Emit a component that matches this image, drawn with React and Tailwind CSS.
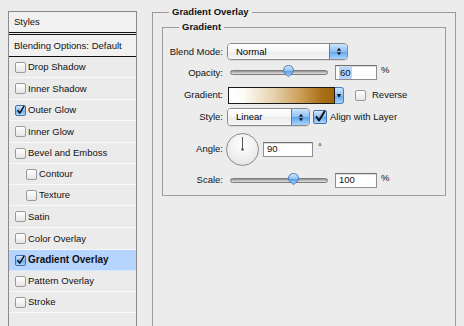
import React from "react";

const STYLES = [
  { label: "Drop Shadow", h: "h-[21px]" },
  { label: "Inner Shadow", h: "h-[22px]" },
  { label: "Outer Glow", h: "h-[21px]", checked: true },
  { label: "Inner Glow", h: "h-[22px]" },
  { label: "Bevel and Emboss", h: "h-[21px]" },
  { label: "Contour", h: "h-[21px]", indent: true },
  { label: "Texture", h: "h-[21px]", indent: true },
  { label: "Satin", h: "h-[22px]" },
  { label: "Color Overlay", h: "h-[22px]" },
  { label: "Gradient Overlay", h: "h-[21px]", checked: true, active: true },
  { label: "Pattern Overlay", h: "h-[21px]" },
  { label: "Stroke", h: "h-[21px]" },
];

function Check({ checked, size = "w-[11px] h-[11px]" }) {
  return (
    <span
      className={`${size} shrink-0 rounded-[2px] border flex items-center justify-center ${
        checked
          ? "border-[#3f6fae] bg-[linear-gradient(#d6e8fc,#86bbf3_50%,#5da2ec_51%,#b4dafd)]"
          : "border-[#9a9a9a] bg-[linear-gradient(#ffffff,#e6e6e6)]"
      }`}
    >
      {checked && (
        <svg viewBox="0 0 12 12" className="w-full h-full overflow-visible">
          <path d="M2.5 6 L5 9.5 L10.5 0.5" fill="none" stroke="#111" strokeWidth="2" strokeLinecap="round" strokeLinejoin="round" />
        </svg>
      )}
    </span>
  );
}

function AquaArrows({ both = true }) {
  return (
    <svg viewBox="0 0 8 12" className="w-[6px] h-[9px]">
      {both && <path d="M4 1 L7 5 H1 Z" fill="#1a1a1a" />}
      <path d={both ? "M4 11 L7 7 H1 Z" : "M4 9 L7 4 H1 Z"} fill="#1a1a1a" />
    </svg>
  );
}

function Popup({ value, width }) {
  return (
    <div
      className={`${width} h-full ml-[4px] flex rounded-[4px] border border-[#8a8a8a] overflow-hidden shadow-[0_1px_0_rgba(0,0,0,0.08)]`}
    >
      <div className="flex-1 flex items-center pl-[8px] text-black bg-[linear-gradient(#ffffff,#f6f6f6_50%,#ebebeb_51%,#f7f7f7)]">
        {value}
      </div>
      <div className="w-[18px] flex items-center justify-center border-l border-[#4d7fc0] bg-[linear-gradient(#cfe4fc,#8cc0f4_50%,#5ea3ec_51%,#a9d5fc)]">
        <AquaArrows />
      </div>
    </div>
  );
}

function Slider({ pct }) {
  return (
    <div className="relative w-[98px] h-full ml-[7px] flex items-center">
      <div className="w-full h-[5px] rounded-full border border-[#7d7d7d] bg-[linear-gradient(#8e8e8e,#c4c4c4_60%,#e2e2e2)]" />
      <svg
        viewBox="0 0 11 12"
        className="absolute w-[11px] h-[12px] top-[1px]"
        style={{ left: `calc(${pct}% - 5.5px)` }}
      >
        <defs>
          <linearGradient id={`knob${pct}`} x1="0" y1="0" x2="0" y2="1">
            <stop offset="0" stopColor="#d9ebfd" />
            <stop offset="0.5" stopColor="#8dc0f3" />
            <stop offset="0.51" stopColor="#5b9fe9" />
            <stop offset="1" stopColor="#a7d3fb" />
          </linearGradient>
        </defs>
        <path d="M5.5 0.5 C8.5 0.5 10.5 2.5 10.5 5.5 C10.5 8 8 9.5 5.5 11.5 C3 9.5 0.5 8 0.5 5.5 C0.5 2.5 2.5 0.5 5.5 0.5 Z" fill={`url(#knob${pct})`} stroke="#3e72b4" strokeWidth="0.9" />
      </svg>
    </div>
  );
}

function Field({ children, width, ml }) {
  return (
    <div
      className={`${width} ${ml} h-[15px] flex items-center pl-[3px] bg-white border border-[#8e8e8e] border-t-[#6e6e6e] shadow-[inset_0_1px_1px_rgba(0,0,0,0.15)]`}
    >
      {children}
    </div>
  );
}

function Row({ label, h, mt, children }) {
  return (
    <div className={`flex items-center ${h} ${mt}`}>
      <span className="w-[60px] text-right shrink-0">{label}</span>
      {children}
    </div>
  );
}

export default function App() {
  return (
    <div className="w-[464px] h-[326px] overflow-hidden flex bg-[#ececec] text-[#111] text-[9.5px] leading-[12px] font-['Liberation_Sans',Arial,sans-serif]">
      <div className="ml-[8px] mt-[11px] w-[129px] h-[330px] shrink-0 border border-[#8a8a8a] bg-[#ebebeb]">
        <div className="h-[21px] flex items-center pl-[5px] border-b border-[#111] bg-[#f1f1f1]">Styles</div>
        <div className="h-[23px] mt-[1px] flex items-center pl-[5px] border-y border-[#111] bg-[#f1f1f1]">
          Blending Options: Default
        </div>
        {STYLES.map((s) => (
          <div
            key={s.label}
            className={`${s.h} flex items-center border-b ${s.indent ? "pl-[17px]" : "pl-[6px]"} ${
              s.active ? "bg-[#b5d5ff] border-[#d7e8ff] font-bold text-[10px]" : "border-[#f9f9f9]"
            }`}
          >
            <Check checked={s.checked} />
            <span className="ml-[2px]">{s.label}</span>
          </div>
        ))}
      </div>

      <fieldset className="ml-[15px] mt-[6px] w-[304px] h-[330px] shrink-0 border border-[#9c9c9c]">
        <legend className="ml-[16px] px-[3px] font-bold">Gradient Overlay</legend>
        <fieldset className="ml-[9px] mt-[3px] w-[284px] border border-[#9c9c9c] pt-[10px] pb-[7px]">
          <legend className="ml-[16px] px-[3px] font-bold">Gradient</legend>

          <Row label="Blend Mode:" h="h-[17px]">
            <Popup value="Normal" width="w-[121px]" />
          </Row>

          <Row label="Opacity:" h="h-[17px]" mt="mt-[4px]">
            <Slider pct={60} />
            <Field width="w-[42px]" ml="ml-[7px]">
              <span className="bg-[#b5d5ff] px-[1px]">60</span>
            </Field>
            <span className="ml-[4px] self-start">%</span>
          </Row>

          <Row label="Gradient:" h="h-[18px]" mt="mt-[5px]">
            <div className="ml-[5px] w-[107px] h-[17px] border border-[#1a1a1a] bg-[linear-gradient(to_right,#ffffff_0%,#fdfbf6_14%,#e8d6b4_40%,#cc9f58_68%,#aa7018_88%,#9e650c_100%)]" />
            <div className="w-[9px] h-[17px] flex items-center justify-center rounded-r-[3px] border border-l-0 border-[#4d7fc0] bg-[linear-gradient(#cfe4fc,#8cc0f4_50%,#5ea3ec_51%,#a9d5fc)]">
              <AquaArrows both={false} />
            </div>
            <span className="ml-[11px]">
              <Check />
            </span>
            <span className="ml-[6px]">Reverse</span>
          </Row>

          <Row label="Style:" h="h-[18px]" mt="mt-[4px]">
            <Popup value="Linear" width="w-[83px]" />
            <span className="ml-[3px]">
              <Check checked size="w-[14px] h-[14px]" />
            </span>
            <span className="ml-[3px]">Align with Layer</span>
          </Row>

          <Row label="Angle:" h="h-[34px]" mt="mt-[6px]">
            <div className="ml-[3px] w-[33px] h-[33px] rounded-full border border-[#8a8a8a] bg-[radial-gradient(circle_at_50%_35%,#ffffff,#ededed_60%,#d8d8d8)] flex justify-center">
              <svg viewBox="0 0 33 33" className="w-[33px] h-[33px] -m-px">
                <line x1="16.5" y1="4" x2="16.5" y2="16.5" stroke="#555" strokeWidth="1" />
                <circle cx="16.5" cy="16.5" r="1.3" fill="#555" />
              </svg>
            </div>
            <Field width="w-[50px]" ml="ml-[4px]">90</Field>
            <span className="ml-[5px] self-start mt-[9px]">°</span>
          </Row>

          <Row label="Scale:" h="h-[16px]" mt="mt-[6px]">
            <Slider pct={64.3} />
            <Field width="w-[42px]" ml="ml-[7px]">100</Field>
            <span className="ml-[4px] self-start">%</span>
          </Row>
        </fieldset>
      </fieldset>
    </div>
  );
}
